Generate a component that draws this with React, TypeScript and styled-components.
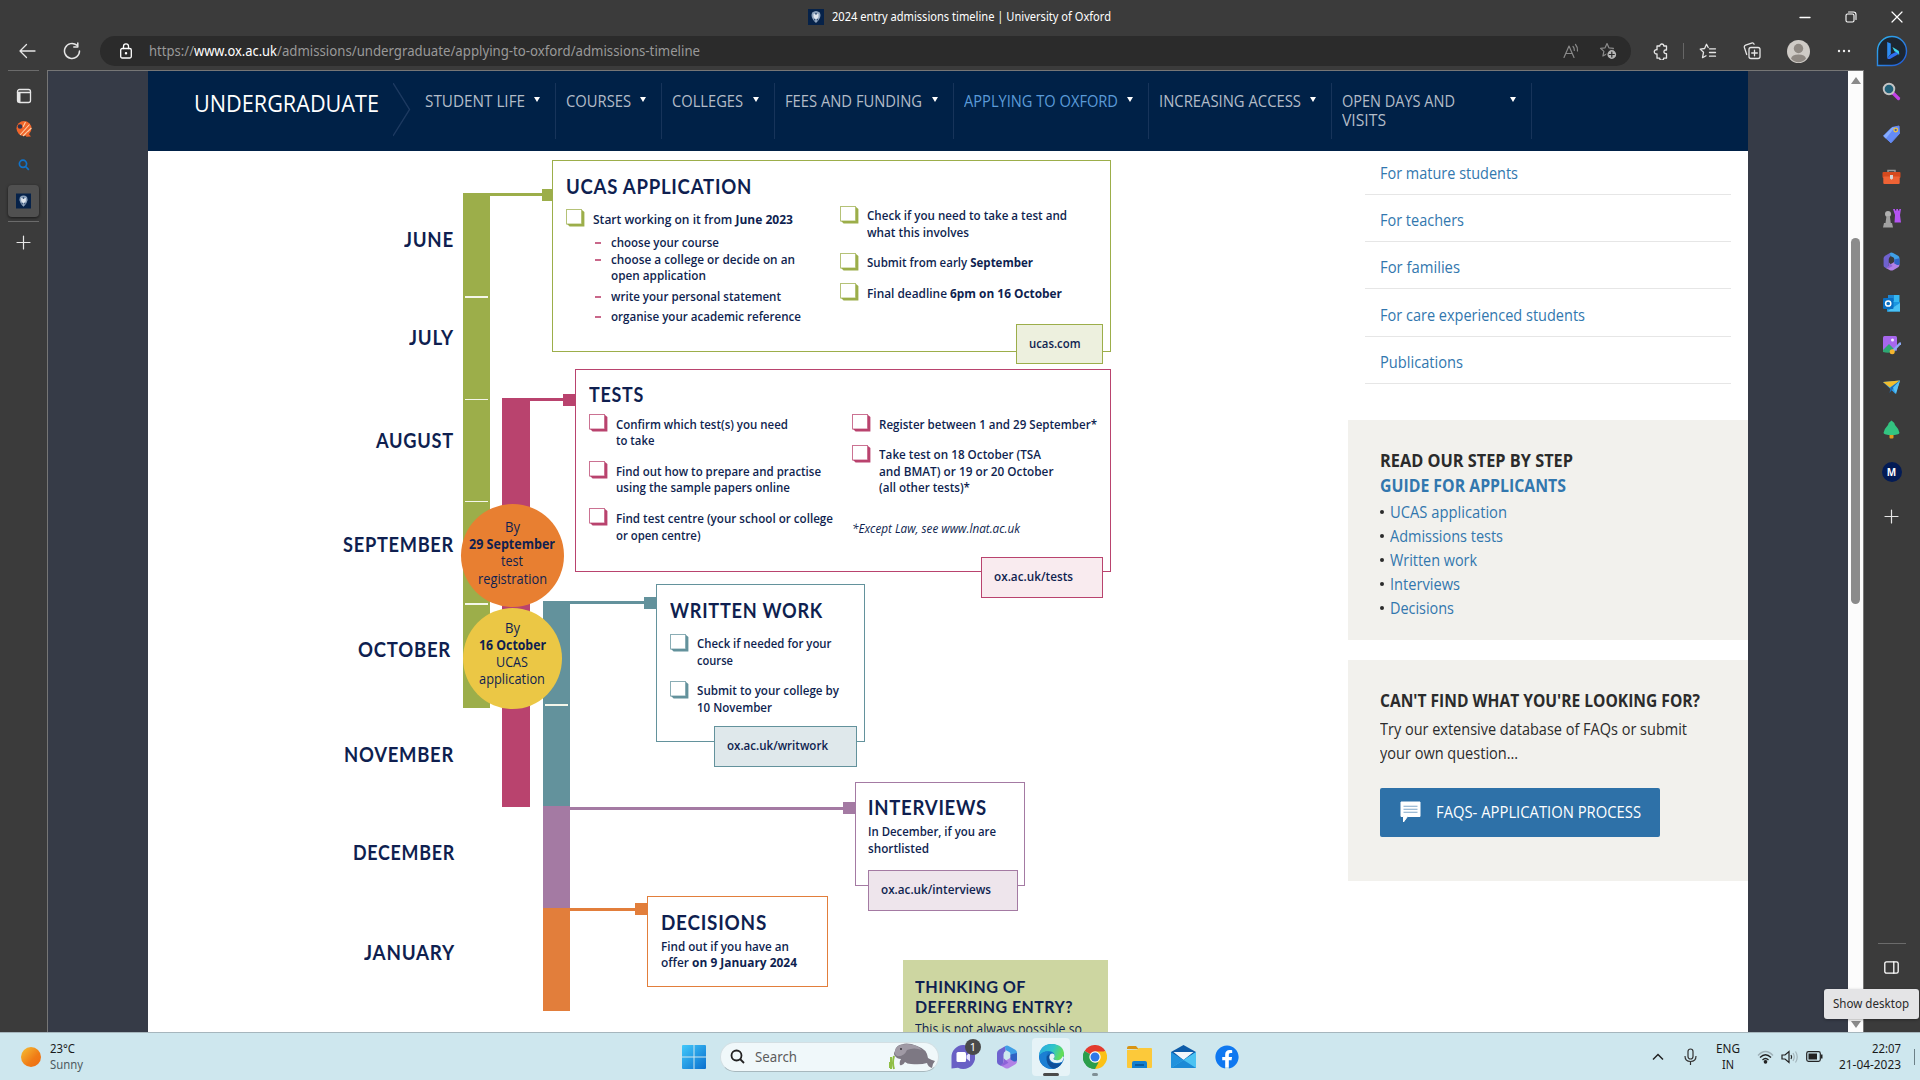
import React, { useLayoutEffect, useRef, useState } from "react";
import styled, { createGlobalStyle, css } from "styled-components";
import { FaFacebook } from "react-icons/fa";

const UI = `"Noto Sans", "Open Sans", sans-serif`;
const BODY = `"Open Sans", "Noto Sans", sans-serif`;
const DISPLAY = `Lato, "Open Sans", sans-serif`;
const NAVY = "#0f1f50";
const GREEN = "#9cae4a";
const PINK = "#b9436e";
const TEAL = "#63929c";
const PURPLE = "#a47aa3";
const ORANGE = "#e27e3b";
const LINK = "#3277ae";

const Global = createGlobalStyle`
  *, *::before, *::after { box-sizing: border-box; }
  html, body { margin: 0; padding: 0; overflow: hidden; }
  body { font-family: ${BODY}; font-size: 16px; }
  p, h1, h2, h3, ul { margin: 0; padding: 0; font-weight: inherit; font-size: inherit; }
  ul { list-style: none; }
  svg { display: block; flex: none; }
`;

/* ---------- text set to a given measure ---------- */
const Measure = styled.span<{ $w: number }>`
  display: block;
  flex: none;
  width: ${(p) => p.$w}px;
  white-space: nowrap;
`;
const Run = styled.span`
  display: inline-block;
  white-space: pre;
  vertical-align: top;
  transform-origin: 0 50%;
`;
function Fit({ w, children }: { w: number; children: React.ReactNode }) {
  const ref = useRef<HTMLSpanElement>(null);
  const [scale, setScale] = useState(1);
  useLayoutEffect(() => {
    const el = ref.current;
    if (el && el.offsetWidth) {
      el.style.transform = "none";
      const s = w / el.getBoundingClientRect().width;
      el.style.transform = `scaleX(${s})`;
      setScale(s);
    }
  }, [w]);
  return (
    <Measure $w={w}>
      <Run ref={ref} style={{ transform: `scaleX(${scale})` }}>{children}</Run>
    </Measure>
  );
}

/* ---------- window frame ---------- */
const Screen = styled.div`
  width: 1920px;
  height: 1080px;
  display: flex;
  flex-direction: column;
  background: #3b3b3b;
  overflow: hidden;
`;
const TitleBar = styled.header`
  height: 36px;
  flex: none;
  display: flex;
  align-items: center;
  padding-left: 808px;
  padding-bottom: 3px;
  gap: 8px;
  color: #fff;
  font: 12px/20px ${UI};
`;
const WindowButtons = styled.div`
  margin-left: auto;
  display: flex;
  align-items: center;
  gap: 34px;
  padding-right: 17px;
`;
const AddressRow = styled.div`
  height: 34px;
  flex: none;
  display: flex;
  align-items: flex-start;
  padding-left: 18px;
`;
const LeadIcons = styled.div`
  width: 82px;
  flex: none;
  height: 30px;
  display: flex;
  align-items: center;
  gap: 27px;
`;
const Address = styled.div`
  width: 1531px;
  flex: none;
  height: 30px;
  border-radius: 15px;
  background: #2b2b2b;
  display: flex;
  align-items: center;
  padding: 0 14px 0 19px;
  color: #999;
  font: 13.5px/30px ${UI};
  strong { font-weight: 400; color: #fff; }
`;
const LockBox = styled.div`width: 30px;`;
const AddressTools = styled.div`
  margin-left: auto;
  display: flex;
  align-items: center;
  gap: 19px;
`;
const BrowserTools = styled.div`
  height: 30px;
  display: flex;
  align-items: center;
  padding-left: 6px;
`;
const ToolSlot = styled.div<{ $w: number }>`
  width: ${(p) => p.$w}px;
  display: flex;
  justify-content: center;
`;
const ToolRule = styled.i`
  width: 1px;
  height: 16px;
  background: #666;
`;
const Main = styled.div`
  flex: 1;
  min-height: 0;
  display: flex;
`;
const LeftRail = styled.nav`
  width: 47px;
  flex: none;
  display: flex;
  flex-direction: column;
  align-items: center;
`;
const RailSlot = styled.div<{ $h: number }>`
  height: ${(p) => p.$h}px;
  width: 47px;
  display: flex;
  align-items: center;
  justify-content: center;
`;
const RailRule = styled.i<{ $w: number }>`
  width: ${(p) => p.$w}px;
  height: 1px;
  flex: none;
  background: #6b6b6b;
`;
const ActiveTab = styled.div`
  width: 31px;
  height: 32px;
  border-radius: 4px;
  background: #505050;
  box-shadow: 0 1px 3px rgba(0, 0, 0, 0.6);
  display: flex;
  align-items: center;
  justify-content: center;
`;
const Page = styled.div`
  flex: 1;
  min-width: 0;
  border: 1px solid #767676;
  border-bottom: 0;
  background: #363b47;
  display: flex;
  justify-content: space-between;
  padding-left: 100px;
  overflow: hidden;
`;
const Sheet = styled.div`
  width: 1600px;
  background: #fff;
`;
const ScrollTrack = styled.div`
  width: 15px;
  background: #fcfcfc;
  display: flex;
  flex-direction: column;
  align-items: center;
  padding: 6px 0 4px;
`;
const Thumb = styled.div`
  width: 9px;
  height: 366px;
  margin-top: 154px;
  margin-bottom: auto;
  border-radius: 5px;
  background: #8b8b8b;
`;
const RightRail = styled.nav`
  width: 56px;
  flex: none;
  display: flex;
  flex-direction: column;
  align-items: center;
  padding-right: 1px;
`;
const RightSlot = styled.div<{ $h: number }>`
  height: ${(p) => p.$h}px;
  flex: none;
  display: flex;
  align-items: center;
  justify-content: center;
`;
const MBadge = styled.div`
  width: 20px;
  height: 20px;
  border-radius: 50%;
  background: #031b55;
  color: #fff;
  text-align: center;
  font: 700 10px/20px ${UI};
`;
const RailFoot = styled.div`
  margin-top: auto;
  height: 89px;
  display: flex;
  flex-direction: column;
  align-items: center;
  gap: 17px;
`;

/* ---------- site navigation ---------- */
const SiteNav = styled.div`
  height: 80px;
  background: #002147;
  display: flex;
  padding: 12px 0 0 46px;
`;
const SiteTitle = styled.h1`
  width: 199px;
  color: #fff;
  font: 23.5px/40px ${BODY};
`;
const NavList = styled.div`
  display: flex;
  padding-left: 4px;
`;
const NavItem = styled.div<{ $w: number; $on?: boolean }>`
  width: ${(p) => p.$w}px;
  height: 56px;
  border-right: 1px solid #17345a;
  padding: 9px 15px 0 10px;
  display: flex;
  justify-content: space-between;
  color: ${(p) => (p.$on ? "#5b9bd8" : "#b3bcc8")};
  font: 16px/19px ${BODY};
`;
const Arrow = styled.i`
  margin-top: 5px;
  width: 0;
  height: 0;
  border: solid transparent;
  border-width: 5px 3.5px 0;
  border-top-color: #fff;
`;
const Body = styled.div`
  height: 881px;
  display: flex;
  overflow: hidden;
`;

/* ---------- timeline diagram ---------- */
const Diagram = styled.section`
  position: relative;
  width: 1200px;
  height: 881px;
  flex: none;
  overflow: hidden;
  color: ${NAVY};
`;
interface BoxProps { $x: number; $y: number; $w: number; $h: number; $c: string }
const at = css<BoxProps>`
  position: absolute;
  left: ${(p) => p.$x - 148}px;
  top: ${(p) => p.$y - 151}px;
  width: ${(p) => p.$w}px;
  height: ${(p) => p.$h}px;
`;
const Bar = styled.div<BoxProps>`
  ${at}
  background: ${(p) => p.$c};
`;
const Month = styled.div<{ $r: number; $y: number }>`
  position: absolute;
  right: ${(p) => 1348 - p.$r}px;
  top: ${(p) => p.$y - 163}px;
  font: 700 20px/24px ${DISPLAY};
  letter-spacing: 0.8px;
`;
const Circle = styled.div<BoxProps>`
  ${at}
  border-radius: 50%;
  background: ${(p) => p.$c};
  display: flex;
  flex-direction: column;
  align-items: center;
  padding-top: 10.5px;
  font: 14.5px/17.2px ${BODY};
  b { font-weight: 700; }
`;
const Card = styled.article<BoxProps & { $pt: number; $pl: number }>`
  ${at}
  border: 1.6px solid ${(p) => p.$c};
  background: #fff;
  padding: ${(p) => p.$pt}px 0 0 ${(p) => p.$pl}px;
  font: 650 13px/16.5px ${BODY};
  b { font-weight: 750; }
`;
const CardTitle = styled.h2`
  font: 700 20px/24px ${DISPLAY};
  letter-spacing: 0.8px;
`;
const Columns = styled.div<{ $first: number }>`
  display: grid;
  grid-template-columns: ${(p) => p.$first}px 1fr;
`;
const Column = styled.div<{ $pt: number }>`
  padding-top: ${(p) => p.$pt}px;
  display: flex;
  flex-direction: column;
  gap: 14.2px;
`;
const Item = styled.div`
  display: flex;
  align-items: flex-start;
`;
const Lines = styled.div`
  padding-top: 0.8px;
  margin-bottom: -0.8px;
`;
const CheckCell = styled.div`
  width: 27px;
  height: 15px;
  margin-top: -1px;
  flex: none;
`;
const SubList = styled.ul<{ $mt: number }>`
  margin-top: ${(p) => p.$mt}px;
  padding-left: 29px;
  font-weight: 550;
`;
const SubItem = styled.li<{ $mb?: number }>`
  display: flex;
  gap: 10.5px;
  margin-bottom: ${(p) => p.$mb || 0}px;
`;
const Dash = styled.i`
  width: 6px;
  height: 2px;
  margin-top: 8px;
  background: #c9678a;
`;
const Note = styled.p`
  margin-top: 11px;
  font-style: italic;
  font-weight: 450;
`;
const UrlBox = styled.div<BoxProps & { $bg: string }>`
  ${at}
  border: 1.6px solid ${(p) => p.$c};
  background: ${(p) => p.$bg};
  padding-left: 12px;
  font: 650 13px/36px ${BODY};
`;
const Defer = styled.div<BoxProps>`
  ${at}
  background: ${(p) => p.$c};
  padding: 17px 12px 0;
  font: 14px/19px ${BODY};
`;
const DeferTitle = styled.h2`
  font: 700 17.5px/20px ${DISPLAY};
  letter-spacing: 0.5px;
  margin-bottom: 2px;
`;

const Check = ({ c }: { c: string }) => (
  <CheckCell>
    <svg width="19" height="18" viewBox="0 0 19 18">
      <path d="M1 15h15V1l2.4 2v14.6H3.6z" fill={c} />
      <rect x=".5" y=".5" width="15" height="14.5" fill="#fff" stroke={c} strokeOpacity=".75" />
    </svg>
  </CheckCell>
);
type Line = [React.ReactNode, number];
const Task = ({ c, lines }: { c: string; lines: Line[] }) => (
  <Item>
    <Check c={c} />
    <Lines>{lines.map((l, i) => <Fit key={i} w={l[1]}>{l[0]}</Fit>)}</Lines>
  </Item>
);

/* ---------- right-hand column ---------- */
const Aside = styled.aside`
  width: 400px;
  flex: none;
  color: #2b2b2b;
`;
const LinkList = styled.ul`
  margin-left: 17px;
  width: 366px;
  height: 269px;
  color: ${LINK};
`;
const LinkRow = styled.li<{ $h: number }>`
  height: ${(p) => p.$h}px;
  padding: 0 0 11.5px 15px;
  border-bottom: 1px solid #e6e6e6;
  display: flex;
  align-items: flex-end;
  line-height: 20px;
`;
const Panel = styled.section<{ $h: number }>`
  height: ${(p) => p.$h}px;
  margin-bottom: 20px;
  padding: 28px 0 0 32px;
  background: #f2f1ed;
  line-height: 24px;
`;
const PanelTitle = styled.h3<{ $link?: boolean }>`
  font: 700 18px/25px ${BODY};
  color: ${(p) => (p.$link ? LINK : "#2b2b2b")};
`;
const GuideList = styled.ul`
  padding-top: 2.4px;
  color: ${LINK};
`;
const GuideRow = styled.li`
  display: flex;
  align-items: center;
  gap: 5.5px;
  &::before {
    content: "";
    width: 4px;
    height: 4px;
    border-radius: 50%;
    background: #2b2b2b;
  }
`;
const PanelText = styled.p`padding-top: 3.5px;`;
const FaqButton = styled.div`
  margin-top: 23px;
  width: 280px;
  height: 49px;
  border-radius: 2px;
  background: #2e71a8;
  color: #fff;
  display: flex;
  align-items: center;
  gap: 15px;
  padding-left: 20px;
`;

/* ---------- taskbar ---------- */
const Taskbar = styled.footer`
  position: relative;
  height: 48px;
  flex: none;
  border-top: 1px solid #a6b6bd;
  background: #cee7ee;
  display: flex;
  align-items: center;
  color: #1b1b1b;
  font: 12px/16px ${UI};
`;
const Weather = styled.div`
  width: 661px;
  padding-left: 21px;
  display: flex;
  align-items: center;
  gap: 9px;
`;
const Sun = styled.i`
  width: 20px;
  height: 20px;
  border-radius: 50%;
  background: linear-gradient(135deg, #f5c236, #f07c16 60%, #ee6a10);
`;
const Muted = styled.div`color: #4d5b60;`;
const StartBox = styled.div`
  width: 44px;
  padding-left: 6px;
  margin-left: 15px;
`;
const Search = styled.div`
  width: 219px;
  height: 30px;
  border-radius: 15px;
  background: #f0f8fa;
  border: 1px solid #d3dfe3;
  border-bottom-color: #a7b8be;
  padding: 0 3px 0 9px;
  display: flex;
  align-items: center;
  color: #5c5c5c;
  font-size: 13.5px;
`;
const Glass = styled.div`width: 25px;`;
const SearchArt = styled.div`margin-left: auto;`;
const Apps = styled.div`
  display: flex;
  padding-left: 2px;
`;
const AppTile = styled.div<{ $on?: boolean }>`
  position: relative;
  width: 38px;
  height: 38px;
  margin: 0 3px;
  border-radius: 4px;
  background: ${(p) => (p.$on ? "#e6f3f7" : "transparent")};
  display: flex;
  align-items: center;
  justify-content: center;
`;
const AppMark = styled.i<{ $w: number; $c: string }>`
  position: absolute;
  bottom: 0;
  left: ${(p) => 19 - p.$w / 2}px;
  width: ${(p) => p.$w}px;
  height: 3px;
  border-radius: 2px;
  background: ${(p) => p.$c};
`;
const Count = styled.span`
  position: absolute;
  right: 1px;
  top: 1px;
  width: 16px;
  height: 16px;
  border-radius: 50%;
  background: #4a4a4a;
  color: #fff;
  text-align: center;
  font: 11px/16px ${UI};
`;
const Tray = styled.div`
  margin-left: auto;
  display: flex;
  align-items: center;
  padding-right: 5px;
`;
const TrayCell = styled.div<{ $w: number; $end?: boolean }>`
  width: ${(p) => p.$w}px;
  display: flex;
  flex-direction: column;
  align-items: ${(p) => (p.$end ? "flex-end" : "center")};
`;
const DesktopEdge = styled.i`
  width: 1px;
  height: 16px;
  margin-left: 13px;
  background: #6c8087;
`;
const Tooltip = styled.div`
  position: absolute;
  right: 1px;
  bottom: 61px;
  height: 30px;
  width: 95px;
  padding-left: 9px;
  border-radius: 3px;
  background: #e4e4e6;
  box-shadow: 0 1px 3px rgba(0, 0, 0, 0.3);
  color: #2a2a2a;
  font: 12px/29px ${UI};
`;

/* ---------- icons ---------- */
const line = { fill: "none", stroke: "#e6e6e6", strokeWidth: 1.3, strokeLinecap: "round", strokeLinejoin: "round" } as const;
const Crest = ({ w = 16 }: { w?: number }) => (
  <svg width={w} height="16" viewBox="0 0 16 16">
    <rect width="16" height="16" fill="#062249" />
    <path d="M4.2 3.6Q8 .6 11.8 3.6q1.6 3.4-.6 6.6Q9.800 12.500 8 14q-2-1.600-3.200-3.800-2.200-3.200-.6-6.600z" fill="#8da2bb" />
    <path d="M5.500 4.700h5v3.600L8 10.500 5.500 8.300z" fill="#dfe6ee" />
    <circle cx="8" cy="4.800" r="1" fill="#3b5578" />
    <circle cx="6.600" cy="10.800" r=".7" fill="#233f66" />
    <circle cx="9.400" cy="10.800" r=".7" fill="#233f66" />
  </svg>
);
const Back = () => <svg width="18" height="16" viewBox="0 0 18 16" {...line}><path d="M17 8H2M8.500 1.500L2 8l6.500 6.500" /></svg>;
const Reload = () => <svg width="18" height="18" viewBox="0 0 18 18" {...line} strokeWidth={1.5}><path d="M16.500 9A7.500 7.500 0 1 1 13.800 3.200M14.800 1v4h-4" /></svg>;
const Lock = () => <svg width="14" height="16" viewBox="0 0 14 16" {...line} stroke="#fff"><rect x="1.700" y="5.500" width="10.600" height="9.500" rx="1.500" /><path d="M4.500 5.500V3.300a2.500 2.500 0 0 1 5 0v2.200" /><circle cx="7" cy="10.300" r=".6" fill="#fff" /></svg>;
const ReadAloud = () => (
  <svg width="17" height="16" viewBox="0 0 17 16" {...line} stroke="#8a8a8a" strokeWidth={1.2}>
    <path d="M1 14.500L6 3l5 11.500M2.800 10.500h6.400M10 3.500q1.500 1.500 1.300 4M12.500 1.500q2.300 2.500 2 6.500" />
  </svg>
);
const STAR = "M8 1.500l1.900 4.300 4.600.5-3.400 3.100 1 4.600L8 11.700 3.900 14l1-4.600L1.500 6.300l4.600-.5z";
const AddStar = () => (
  <svg width="18" height="18" viewBox="0 0 18 18" {...line} stroke="#8a8a8a" strokeWidth={1.2}>
    <path d={STAR} />
    <circle cx="12.800" cy="12.500" r="5" fill="#b5b5b5" stroke="#2b2b2b" />
    <path d="M12.800 10v5M10.300 12.500h5" stroke="#2b2b2b" />
  </svg>
);
const Puzzle = () => (
  <svg width="16" height="17" viewBox="0 0 16 17" {...line}>
    <path d="M5 3h2.800a2 2 0 0 1 4 0H14.500v4h-.8a1.800 1.800 0 0 0 0 3.600h.8v4.600h-2.800a2 2 0 0 1-4 0H5v-4.400a2.100 2.100 0 1 1 0-4z" />
  </svg>
);
const Favs = () => (
  <svg width="18" height="17" viewBox="0 0 18 17" {...line}>
    <path d="M9.200 4.500L7.500 1.300 5.600 5.500l-4.400.6 3.300 3.200-1 5.400 3.500-2M10.500 5.800h6M10.500 9.500h6M10.500 13.200h6" />
  </svg>
);
const Collections = () => (
  <svg width="18" height="18" viewBox="0 0 18 18" {...line}>
    <rect x="6" y="5.500" width="11" height="11" rx="2" />
    <path d="M11.500 8.200v5.600M8.700 11h5.600M3.700 12.500l-2.300-7a2 2 0 0 1 1.200-2.400l6-2a2 2 0 0 1 2.500 1.100" />
  </svg>
);
const Avatar = () => (
  <svg width="23" height="23" viewBox="0 0 23 23">
    <circle cx="11.500" cy="11.500" r="11.500" fill="#cfcbc6" />
    <circle cx="11.500" cy="8.500" r="4.700" fill="#8f8983" />
    <path d="M4 18.500q1-4 7.500-4t7.500 4q-3 3.800-7.500 3.800T4 18.500z" fill="#8f8983" />
  </svg>
);
const Dots = () => <svg width="14" height="4" viewBox="0 0 14 4" fill="#eee"><circle cx="2" cy="2" r="1.200" /><circle cx="7" cy="2" r="1.200" /><circle cx="12" cy="2" r="1.200" /></svg>;
const Bing = () => (
  <svg width="32" height="32" viewBox="0 0 32 32">
    <defs>
      <linearGradient id="bing" x1="0" y1="0" x2="1" y2="1"><stop offset="0" stopColor="#2fb4ef" /><stop offset=".6" stopColor="#2a7de0" /><stop offset="1" stopColor="#1e55d8" /></linearGradient>
    </defs>
    <path d="M1.500 30.500V16A14.500 14.500 0 1 1 16 30.500z" fill="#1d2631" stroke="url(#bing)" strokeWidth="1.400" />
    <path d="M11.200 7l3.600 1.500v10.200l-3.600 4.700z" fill="#2d8df2" />
    <path d="M11.200 23.200q1.500 1.600 3.600.4l6.500-3.800q2.500-1.600 1.500-4.400l-8 4.200z" fill="#2f6ff0" />
    <path d="M16.400 12l2 4.200 2 1q2.500.9 2.600 3.200.9-3.700-2-5.600z" fill="#3fd5e8" />
  </svg>
);
const SideTabs = () => <svg width="16" height="16" viewBox="0 0 16 16" {...line}><rect x="1.500" y="1.500" width="13" height="13" rx="2" /><path d="M1.500 4.500h13" /><rect x="1.500" y="4.500" width="3" height="10" fill="#e6e6e6" stroke="none" /></svg>;
const Leaf = () => (
  <svg width="16" height="16" viewBox="0 0 16 16">
    <circle cx="8" cy="7.500" r="7.500" fill="#f0652a" />
    <path d="M4 14L13.500 3.500M7 15L15.400 7M7 6L9.500 1" stroke="#ffd0a8" strokeWidth="1.100" />
    <circle cx="4" cy="5.500" r="2.300" fill="#2d3350" />
    <path d="M11 11l4 4.500-5 .3z" fill="#f0652a" />
  </svg>
);
const SmallSearch = () => <svg width="12" height="12" viewBox="0 0 12 12" fill="none" stroke="#1173c9" strokeWidth="1.700"><circle cx="5" cy="4.800" r="3.600" /><path d="M7.600 7.500l3.200 3.300" /></svg>;
const Plus = () => <svg width="15" height="15" viewBox="0 0 15 15" {...line} strokeWidth={1.2}><path d="M7.500 1v13M1 7.500h13" /></svg>;
const SideGlyph = ({ n }: { n: number }) => (
  <svg width="19" height="19" viewBox="0 0 19 19">
    {n === 0 && <><path d="M11 11l5.500 5.500" stroke="#c442e8" strokeWidth="3.200" strokeLinecap="round" /><circle cx="7" cy="7" r="5.300" fill="#226179" stroke="#c4c4c4" strokeWidth="1.900" /></>}
    {n === 1 && <><path d="M10 2.500L17 1l.5 7.500-8.500 9.300L1.500 11z" fill="#648bf7" stroke="#648bf7" strokeLinejoin="round" /><path d="M1.500 11L10 2.500 13 2 4 13.500z" fill="#86adff" /><circle cx="13.700" cy="5" r="1.800" fill="#4d57b0" stroke="#f2c83a" strokeWidth="1.300" /></>}
    {n === 2 && <><path d="M6 6V3.500h7V6" fill="none" stroke="#9a9a9a" strokeWidth="1.500" /><rect x=".5" y="5" width="18" height="6" rx="1" fill="#d64a1e" /><rect x="1.300" y="9.500" width="16.400" height="7.500" rx="1" fill="#ef6335" /><path d="M8 8h3v3.500l-1.500 1.200L8 11.500z" fill="#d6d6d6" /></>}
    {n === 3 && <><circle cx="6" cy="5" r="3" fill="#b0b0b0" /><path d="M4.500 7h3.300l1 7H10l1 4.500H1L2 14h1.500z" fill="#a0a0a0" /><path d="M11 0h2v1.500h1.300V0h1.700v1.500h1.300V0H19l-1 6 1 7.500h-6.500L13 6z" fill="#b453f2" /></>}
    {n === 5 && <><path d="M6 1h11.500v8H6z" fill="#35b7f1" /><path d="M6 1h6v6H6z" fill="#1d86d2" /><path d="M5 8h13v9.500H5z" fill="#1a96e0" /><path d="M5 17.500L18 9v8.500z" fill="#4ac2f5" /><rect x="1" y="4" width="10.500" height="11" rx="1" fill="#0b6fc2" /><circle cx="6.200" cy="9.500" r="2.600" fill="none" stroke="#fff" strokeWidth="1.500" /></>}
    {n === 6 && <><rect x="1" y="0" width="14" height="15" rx="1.500" fill="#a767ee" /><path d="M1 14l6-6 7 7q-7 3-13 1z" fill="#2ea874" /><circle cx="10.500" cy="4" r="1.500" fill="#f3e8ff" /><path d="M18 7.500l-7.500 8" stroke="#8caaf5" strokeWidth="2.500" strokeLinecap="round" /><circle cx="10.200" cy="15.800" r="2.500" fill="#f5b52e" /></>}
    {n === 7 && <><path d="M1 4l17-1.500L13.500 16 9 11.500z" fill="#2f9fe8" /><path d="M1 4l17-1.500L8 9.500z" fill="#f2bd2c" /><path d="M18 2.500L8.500 9.500 7.500 15z" fill="#1b6cb8" /><path d="M18 2.500l-7 7 3 6.500z" fill="#58c1f5" /></>}
    {n === 8 && <><rect x="7.500" y="13" width="4" height="5.500" rx="1" fill="#e39a1c" /><path d="M9.500.5q3 2 3.500 4.500 4 4 4.500 8-1 2-8 2t-8-2q.5-4 4.500-8Q6.500 2.500 9.500.5z" fill="#33c481" /></>}
  </svg>
);
const M365 = ({ s }: { s: number }) => (
  <svg width={s} height={s} viewBox="0 0 22 24">
    <path d="M9.500 1L3 4.700Q1 6 1 8v9q0 1.800 1.800 2.700l2 1Q7.500 19.500 7.500 16V9.500Q7.500 7 9.500 6z" fill="#6f62cf" />
    <path d="M9 1.200q2-1.200 4 0l6.300 3.500Q21 5.700 21 7.600V15l-6.500-3.500v-2Q14.500 7.500 13 6.700L9.500 5z" fill="#3f9fe6" />
    <path d="M14.500 11.500L21 15v1.500q0 1.800-1.600 2.800L13 22.900q-2 1-4 0l-4.500-2.500Q7.500 19 8 16.500l5-2.800q1.500-.7 1.500-2.200z" fill="#b181e6" />
    <path d="M14.500 9.500L21 8v7q-1 2.200-3.500 1.200L14.500 14.500z" fill="#2f62c4" />
    <path d="M7.500 13v4q-.5 3-3 3.500 2 .5 4-.5l4-2.300z" fill="#8d63d8" />
  </svg>
);
const PanelIcon = () => <svg width="15" height="13" viewBox="0 0 15 13" {...line} stroke="#fff"><rect x=".8" y=".8" width="13.400" height="11.400" rx="1.800" /><path d="M9.800.8v11.400" /></svg>;
const Chevron = () => <svg width="18" height="54" viewBox="0 0 18 54" fill="none" stroke="#1d3a61" strokeWidth="1.400"><path d="M0 0l16.500 26.500L0 53" /></svg>;
const Speech = () => (
  <svg width="21" height="22" viewBox="0 0 21 22">
    <path d="M1 1h19v14.500H7.500L3.500 21v-5.500H1z" fill="#fff" stroke="#fff" strokeLinejoin="round" />
    <path d="M3.500 5.200h14M3.500 8.200h14M3.500 11.200h14" stroke="#7fa7c9" strokeWidth="1.100" />
  </svg>
);
const Windows = () => (
  <svg width="24" height="24" viewBox="0 0 24 24">
    <defs><linearGradient id="win" x1="0" y1="0" x2="1" y2="1"><stop offset="0" stopColor="#42c9fb" /><stop offset="1" stopColor="#0a6fce" /></linearGradient></defs>
    <path d="M0 1q0-1 1-1h10.500v11.500H0zM12.500 0H23q1 0 1 1v10.500H12.500zM0 12.500h11.500V24H1q-1 0-1-1zM12.500 12.500H24V23q0 1-1 1H12.500z" fill="url(#win)" />
  </svg>
);
const Manatee = () => (
  <svg width="46" height="27" viewBox="0 0 46 27">
    <path d="M2 26V14M5 26q-2-6 0-13M1 25v-6" stroke="#8fbf45" strokeWidth="2" fill="none" />
    <path d="M6 8q1-6 7-6.500Q18-1 28 3q10 3 11 12 3 2 7 3l-2 3-1 4q-4-1-5-5-6 2-16 1-4 0-6-2-2 4-5 3-1-3 1-6-4 0-6-3-2-2 0-5z" fill="#7d7883" />
    <path d="M6 8q1-5 6.500-6.500L18 1q10 0 15 6-8-3-15 0-3 7-10 6-3-2-2-5z" fill="#a09aa5" />
    <circle cx="12" cy="6" r=".9" fill="#2c2930" />
  </svg>
);
const Teams = () => (
  <svg width="24" height="24" viewBox="0 0 24 24">
    <path d="M12 0a12 12 0 1 1-5 22.800L.5 23.500V12A12 12 0 0 1 12 0z" fill="#6960c5" />
    <rect x="5.500" y="7" width="9.500" height="10" rx="1.500" fill="#fff" /><path d="M15.500 10.500L19 7.500v9l-3.500-3z" fill="#e4e1ff" />
  </svg>
);
const Edge = () => (
  <svg width="25" height="25" viewBox="0 0 24 24">
    <defs><linearGradient id="edge" x1="0" y1="0" x2="1" y2=".3"><stop offset="0" stopColor="#2aa7e6" /><stop offset=".6" stopColor="#2fc6c8" /><stop offset="1" stopColor="#63dd57" /></linearGradient></defs>
    <circle cx="12" cy="12" r="12" fill="#1474c6" />
    <path d="M0 11.500Q1 0 12.500 0 24 .8 24 10q-.5 5-6 5.500-4 0-4-1.800 1.500-1 1-3.200Q14 7 9.500 7 3 7 0 11.500z" fill="url(#edge)" />
    <path d="M9.500 7Q5 12 8 17.500q4 5.500 12.500 3Q17 24 12 24 1 23 0 12 2.500 7 9.500 7z" fill="#1b7fd3" />
    <path d="M7.500 12Q6 20 13.500 23.800 19 23.500 22 18q-6 2.500-11-1-2.500-3-.5-7.500Q8.500 10 7.500 12z" fill="#0f4f9a" />
    <path d="M11 9.500q-2.500 4 1 7.200 4 2.800 10.200.3L24 13l-1-1.500q-2 4-5.500 4-4 0-3.500-1.800 1.700-1.200.7-3.700Q13 8.500 11 9.500z" fill="#e6f3f7" />
  </svg>
);
const Chrome = () => (
  <svg width="24" height="24" viewBox="0 0 24 24">
    <path d="M12 12L1.600 6A12 12 0 0 1 22.400 6z" fill="#e33b2e" />
    <path d="M12 12l10.400-6A12 12 0 0 1 12 24z" fill="#fbc116" />
    <path d="M12 12v12A12 12 0 0 1 1.600 6z" fill="#2c9e4b" />
    <path d="M12 6.500h10.700a12 12 0 0 1 .3 2L17 15l-5 9-1-6z" fill="#fbc116" />
    <path d="M1.600 6l5.600 9L12 17.500l3.600-.3L12 24A12 12 0 0 1 1.600 6z" fill="#2c9e4b" />
    <circle cx="12" cy="12" r="5.700" fill="#fff" /><circle cx="12" cy="12" r="4.500" fill="#2f78ea" />
  </svg>
);
const Folder = () => (
  <svg width="25" height="22" viewBox="0 0 25 22">
    <path d="M0 2q0-2 2-2h7l2.500 3H0z" fill="#d99412" /><path d="M0 4l10-.5L12 2h12q1 0 1 1v18q0 1-1 1H1q-1 0-1-1z" fill="#fcc93a" />
    <path d="M5 22v-5q0-2 2-2h11q2 0 2 2v5z" fill="#1280cf" /><path d="M8 18h9v2H8z" fill="#0b5b9c" />
  </svg>
);
const Mail = () => (
  <svg width="25" height="23" viewBox="0 0 25 23">
    <path d="M0 7l12.500-7L25 7v8H0z" fill="#0d5ba8" /><path d="M2.500 7h20l-10 8z" fill="#f2f7fb" /><path d="M0 7l12.500 8L25 7v16H0z" fill="#2192dd" /><path d="M0 23L25 7v16z" fill="#4cc3f2" /><path d="M0 23h25L12.500 15z" fill="#1c8ad6" />
  </svg>
);
const FbDisc = styled.div`
  width: 24px;
  height: 24px;
  border-radius: 50%;
  background: radial-gradient(circle, #fff 60%, transparent 62%);
  color: #0f78f0;
`;

const Triangle = ({ up }: { up?: boolean }) => <svg width="10" height="7" viewBox="0 0 10 7"><path d={up ? "M5 0l5 7H0z" : "M0 0h10L5 7z"} fill="#8a8a8a" /></svg>;

const NAV: [string[], number[], number, boolean?][] = [
  [["STUDENT LIFE"], [100], 141],
  [["COURSES"], [65], 106],
  [["COLLEGES"], [71], 113],
  [["FEES AND FUNDING"], [137], 179],
  [["APPLYING TO OXFORD"], [154], 195, true],
  [["INCREASING ACCESS"], [142], 183],
  [["OPEN DAYS AND", "VISITS"], [113, 44], 200],
];
const MONTHS: [string, number, number, number][] = [
  ["JUNE", 454, 50, 239], ["JULY", 454, 45, 337], ["AUGUST", 454, 78, 440], ["SEPTEMBER", 454, 111, 543.5],
  ["OCTOBER", 451, 93, 648.5], ["NOVEMBER", 454, 110, 754], ["DECEMBER", 454.5, 102, 851.5], ["JANUARY", 454.5, 91, 952],
];
const BARS: [number, number, number, number, string][] = [
  [463, 193, 27, 515, GREEN], [490, 193, 53, 3, GREEN], [542, 189, 11, 12, GREEN],
  [502, 398, 28, 408.5, PINK], [530, 398, 34, 3, PINK], [563, 394, 12, 12, PINK],
  [543, 601, 27, 205, TEAL], [570, 601, 75, 3, TEAL], [644, 597, 12, 12, TEAL],
  [543, 806, 27, 102, PURPLE], [570, 806.5, 274, 3, PURPLE], [843, 802, 12, 12, PURPLE],
  [543, 908, 27, 102.5, ORANGE], [570, 908, 66, 3, ORANGE], [635, 903, 12, 12, ORANGE],
];
const TICKS = [[465, 296], [465, 398.5], [465, 500.5], [465, 603], [545, 704]];

function Timeline() {
  return (
    <Diagram>
      {MONTHS.map(([m, r, w, y]) => <Month key={m} $r={r} $y={y}><Fit w={w}>{m}</Fit></Month>)}
      {BARS.map(([x, y, w, h, c], i) => <Bar key={i} $x={x} $y={y} $w={w} $h={h} $c={c} />)}
      {TICKS.map(([x, y], i) => <Bar key={i} $x={x} $y={y} $w={23} $h={1.5} $c="#f4f6ea" />)}
      <Circle $x={461} $y={504} $w={102.500} $h={103} $c="#e87f31">
        <Spacer />
        <Fit w={15}>By</Fit>
        <b><Fit w={86}>29 September</Fit></b>
        <Fit w={22}>test</Fit>
        <Fit w={69}>registration</Fit>
      </Circle>
      <Circle $x={462.5} $y={608} $w={99} $h={101} $c="#ebc745">
        <Fit w={15}>By</Fit>
        <b><Fit w={67}>16 October</Fit></b>
        <Fit w={32}>UCAS</Fit>
        <Fit w={66}>application</Fit>
      </Circle>

      <Card $x={552} $y={160} $w={559} $h={191.5} $c={GREEN} $pt={12.5} $pl={12.5}>
        <CardTitle><Fit w={186}>UCAS APPLICATION</Fit></CardTitle>
        <Columns $first={274}>
          <div>
            <Column $pt={12.5}>
              <Task c={GREEN} lines={[[<>Start working on it from <b>June 2023</b></>, 200]]} />
            </Column>
            <SubList $mt={7.5}>
              <SubItem><Dash /><Fit w={108}>choose your course</Fit></SubItem>
              <SubItem $mb={4}><Dash /><div><Fit w={184}>choose a college or decide on an</Fit><Fit w={95}>open application</Fit></div></SubItem>
              <SubItem $mb={4}><Dash /><Fit w={170}>write your personal statement</Fit></SubItem>
              <SubItem><Dash /><Fit w={190}>organise your academic reference</Fit></SubItem>
            </SubList>
          </div>
          <Column $pt={9}>
            <Task c={GREEN} lines={[["Check if you need to take a test and", 200], ["what this involves", 102]]} />
            <Task c={GREEN} lines={[[<>Submit from early <b>September</b></>, 166]]} />
            <Task c={GREEN} lines={[[<>Final deadline <b>6pm on 16 October</b></>, 195]]} />
          </Column>
        </Columns>
      </Card>
      <UrlBox $x={1016} $y={324} $w={87} $h={40} $c={GREEN} $bg="#edf0de"><Fit w={51.5}>ucas.com</Fit></UrlBox>

      <Card $x={575} $y={369} $w={536} $h={203} $c={PINK} $pt={11.5} $pl={12.5}>
        <CardTitle><Fit w={55}>TESTS</Fit></CardTitle>
        <Columns $first={263}>
          <Column $pt={9.5}>
            <Task c={PINK} lines={[["Confirm which test(s) you need", 172], ["to take", 38.5]]} />
            <Task c={PINK} lines={[["Find out how to prepare and practise", 205], ["using the sample papers online", 174]]} />
            <Task c={PINK} lines={[["Find test centre (your school or college", 217], ["or open centre)", 84.5]]} />
          </Column>
          <Column $pt={9.5}>
            <Task c={PINK} lines={[["Register between 1 and 29 September*", 218]]} />
            <Task c={PINK} lines={[["Take test on 18 October (TSA", 162], ["and BMAT) or 19 or 20 October", 174.5], ["(all other tests)*", 91]]} />
            <Note><Fit w={168}>*Except Law, see www.lnat.ac.uk</Fit></Note>
          </Column>
        </Columns>
      </Card>
      <UrlBox $x={981} $y={557} $w={122} $h={41} $c={PINK} $bg="#f9ebef"><Fit w={79}>ox.ac.uk/tests</Fit></UrlBox>

      <Card $x={656} $y={584} $w={209} $h={158} $c={TEAL} $pt={12.5} $pl={12.5}>
        <CardTitle><Fit w={153}>WRITTEN WORK</Fit></CardTitle>
        <Column $pt={13}>
          <Task c={TEAL} lines={[["Check if needed for your", 134.5], ["course", 36]]} />
          <Task c={TEAL} lines={[["Submit to your college by", 142], ["10 November", 75]]} />
        </Column>
      </Card>
      <UrlBox $x={714} $y={726} $w={143} $h={41} $c={TEAL} $bg="#dfe8eb"><Fit w={101}>ox.ac.uk/writwork</Fit></UrlBox>

      <Card $x={854.5} $y={782} $w={170} $h={104} $c={PURPLE} $pt={12} $pl={12}>
        <CardTitle><Fit w={119}>INTERVIEWS</Fit></CardTitle>
        <Column $pt={4}><div><Fit w={128}>In December, if you are</Fit><Fit w={61}>shortlisted</Fit></div></Column>
      </Card>
      <UrlBox $x={868} $y={870} $w={150} $h={40.5} $c={PURPLE} $bg="#eee5ec"><Fit w={110}>ox.ac.uk/interviews</Fit></UrlBox>

      <Card $x={647} $y={896} $w={180.5} $h={91} $c={ORANGE} $pt={12.5} $pl={12.5}>
        <CardTitle><Fit w={106}>DECISIONS</Fit></CardTitle>
        <Column $pt={4}><div><Fit w={128}>Find out if you have an</Fit><Fit w={136}>offer <b>on 9 January 2024</b></Fit></div></Column>
      </Card>

      <Defer $x={903} $y={960} $w={205} $h={100} $c="#cdd6a1">
        <DeferTitle><Fit w={111}>THINKING OF</Fit><Fit w={158}>DEFERRING ENTRY?</Fit></DeferTitle>
        <Fit w={167}>This is not always possible so</Fit>
      </Defer>
    </Diagram>
  );
}
const Spacer = styled.i`height: 3.5px;`;

const LINKS: [string, number, number][] = [
  ["For mature students", 138, 44], ["For teachers", 84, 47], ["For families", 80, 47], ["For care experienced students", 205, 48], ["Publications", 83, 47],
];
const GUIDE: [string, number][] = [["UCAS application", 117], ["Admissions tests", 113], ["Written work", 87], ["Interviews", 70], ["Decisions", 64]];
const RIGHT_SLOTS = [43, 43, 41, 43, 42, 42, 42, 42, 42];

function NavRow() {
  return (
    <NavList>
      {NAV.map(([lines, widths, w, on]) => (
        <NavItem key={lines[0]} $w={w} $on={on}>
          <div>{lines.map((l, i) => <Fit key={l} w={widths[i]}>{l}</Fit>)}</div>
          <Arrow />
        </NavItem>
      ))}
    </NavList>
  );
}

export default function App() {
  return (
    <Screen>
      <Global />
      <TitleBar>
        <Crest />
        <Fit w={279}>2024 entry admissions timeline | University of Oxford</Fit>
        <WindowButtons>
          <svg width="12" height="12" {...line} stroke="#fff"><path d="M1 6.500h10" /></svg>
          <svg width="12" height="12" {...line} stroke="#fff" strokeWidth="1.100"><rect x="1" y="3" width="8" height="8" rx="1.500" /><path d="M3.500 1h5q2.500 0 2.500 2.500v5" /></svg>
          <svg width="12" height="12" {...line} stroke="#fff" strokeWidth="1.200"><path d="M1 1l10 10M11 1L1 11" /></svg>
        </WindowButtons>
      </TitleBar>
      <AddressRow>
        <LeadIcons><Back /><Reload /></LeadIcons>
        <Address>
          <LockBox><Lock /></LockBox>
          <Fit w={45}>https://</Fit>
          <Fit w={83}><strong>www.ox.ac.uk</strong></Fit>
          <Fit w={423}>/admissions/undergraduate/applying-to-oxford/admissions-timeline</Fit>
          <AddressTools><ReadAloud /><AddStar /></AddressTools>
        </Address>
        <BrowserTools>
          <ToolSlot $w={46}><Puzzle /></ToolSlot>
          <ToolRule />
          <ToolSlot $w={48}><Favs /></ToolSlot>
          <ToolSlot $w={40}><Collections /></ToolSlot>
          <ToolSlot $w={52}><Avatar /></ToolSlot>
          <ToolSlot $w={40}><Dots /></ToolSlot>
          <ToolSlot $w={56}><Bing /></ToolSlot>
        </BrowserTools>
      </AddressRow>
      <Main>
        <LeftRail>
          <RailRule $w={31} />
          <RailSlot $h={49}><SideTabs /></RailSlot>
          <RailSlot $h={18}><Leaf /></RailSlot>
          <RailSlot $h={54}><SmallSearch /></RailSlot>
          <RailSlot $h={18}><ActiveTab><Crest w={15} /></ActiveTab></RailSlot>
          <RailSlot $h={11} />
          <RailRule $w={31} />
          <RailSlot $h={40}><Plus /></RailSlot>
        </LeftRail>
        <Page>
          <Sheet>
            <SiteNav>
              <SiteTitle><Fit w={185}>UNDERGRADUATE</Fit></SiteTitle>
              <Chevron />
              <NavRow />
            </SiteNav>
            <Body>
              <Timeline />
              <Aside>
                <LinkList>
                  {LINKS.map(([t, w, h]) => <LinkRow key={t} $h={h}><Fit w={w}>{t}</Fit></LinkRow>)}
                </LinkList>
                <Panel $h={220}>
                  <PanelTitle><Fit w={193}>READ OUR STEP BY STEP</Fit></PanelTitle>
                  <PanelTitle $link><Fit w={186}>GUIDE FOR APPLICANTS</Fit></PanelTitle>
                  <GuideList>{GUIDE.map(([t, w]) => <GuideRow key={t}><Fit w={w}>{t}</Fit></GuideRow>)}</GuideList>
                </Panel>
                <Panel $h={221}>
                  <PanelTitle><Fit w={320}>CAN'T FIND WHAT YOU'RE LOOKING FOR?</Fit></PanelTitle>
                  <PanelText><Fit w={307}>Try our extensive database of FAQs or submit</Fit><Fit w={138}>your own question…</Fit></PanelText>
                  <FaqButton><Speech /><Fit w={205}>FAQS- APPLICATION PROCESS</Fit></FaqButton>
                </Panel>
              </Aside>
            </Body>
          </Sheet>
          <ScrollTrack><Triangle up /><Thumb /><Triangle /></ScrollTrack>
        </Page>
        <RightRail>
          {RIGHT_SLOTS.map((h, i) => <RightSlot key={i} $h={h}>{i === 4 ? <M365 s={19} /> : <SideGlyph n={i} />}</RightSlot>)}
          <RightSlot $h={43}><MBadge>M</MBadge></RightSlot>
          <RightSlot $h={46}><Plus /></RightSlot>
          <RailFoot><RailRule $w={28} /><PanelIcon /></RailFoot>
        </RightRail>
      </Main>
      <Taskbar>
        <Weather>
          <Sun />
          <div><Fit w={25}>23°C</Fit><Muted><Fit w={33}>Sunny</Fit></Muted></div>
        </Weather>
        <StartBox><Windows /></StartBox>
        <Search>
          <Glass><svg width="15" height="15" fill="none" stroke="#222" strokeWidth="1.800"><circle cx="6.500" cy="6.500" r="5" /><path d="M10 10l4 4" /></svg></Glass>
          <Fit w={42}>Search</Fit>
          <SearchArt><Manatee /></SearchArt>
        </Search>
        <Apps>
          <AppTile><Teams /><Count>1</Count></AppTile>
          <AppTile><M365 s={24} /></AppTile>
          <AppTile $on><Edge /><AppMark $w={16} $c="#4a4a4a" /></AppTile>
          <AppTile><Chrome /><AppMark $w={6} $c="#7f8f95" /></AppTile>
          <AppTile><Folder /></AppTile>
          <AppTile><Mail /></AppTile>
          <AppTile><FbDisc><FaFacebook size={24} /></FbDisc></AppTile>
        </Apps>
        <Tray>
          <TrayCell $w={20}><svg width="12" height="8" fill="none" stroke="#222" strokeWidth="1.500"><path d="M1 6.500l5-5 5 5" /></svg></TrayCell>
          <TrayCell $w={44}><svg width="13" height="17" fill="none" stroke="#333" strokeWidth="1.200"><rect x="4" y="1" width="5" height="10" rx="2.500" /><path d="M1 8q0 5.500 5.500 5.500T12 8M6.500 13.500V17" /></svg></TrayCell>
          <TrayCell $w={32}><Fit w={24}>ENG</Fit><Fit w={12}>IN</Fit></TrayCell>
          <TrayCell $w={43}><svg width="17" height="14" fill="none" stroke="#222" strokeWidth="1.300"><path d="M1 5.500q7.500-8 15 0" stroke="#9fb1b8" /><path d="M3 7.500q5.500-5.500 11 0M5.500 10q3-3 6 0" /><circle cx="8.500" cy="11.800" r="1.200" fill="#222" /></svg></TrayCell>
          <TrayCell $w={6}><svg width="18" height="14" fill="none" stroke="#222" strokeWidth="1.200"><path d="M1 5h3l4-3.500v11L4 9H1zM10 5q1.300 2 0 4" /><path d="M12 3q2.500 4 0 8M14.500 1.500q3.500 5.500 0 11" stroke="#a3b5bb" /></svg></TrayCell>
          <TrayCell $w={42}><svg width="17" height="11"><rect x=".7" y=".7" width="13.600" height="9.600" rx="1.800" fill="none" stroke="#222" strokeWidth="1.200" /><rect x="2.500" y="2.500" width="8.500" height="6" fill="#222" /><rect x="15" y="3.500" width="1.500" height="4" fill="#222" /></svg></TrayCell>
          <TrayCell $w={66} $end><Fit w={29}>22:07</Fit><Fit w={62}>21-04-2023</Fit></TrayCell>
          <DesktopEdge />
        </Tray>
        <Tooltip><Fit w={76}>Show desktop</Fit></Tooltip>
      </Taskbar>
    </Screen>
  );
}
